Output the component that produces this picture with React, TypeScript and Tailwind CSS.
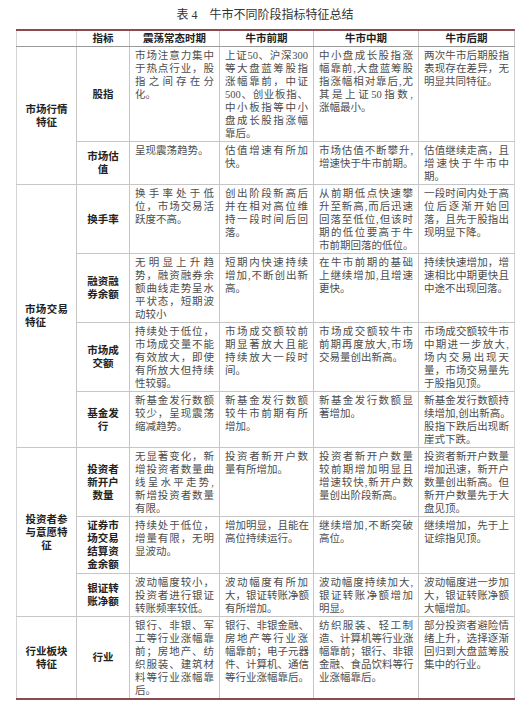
import React from 'react';

type Row = { label: string[]; cells: string[][] };
type Group = { label: string[]; spread?: boolean; rows: Row[] };

const groups: Group[] = [
  {
    label: ['市场行情', '特征'],
    rows: [
      {
        label: ['股指'],
        cells: [
          ['市场注意力集中', '于热点行业，股', '指之间存在分', '化。'],
          ['上证 50、沪深 300', '等大盘蓝筹股指', '涨幅靠前，中证', '500、创业板指、', '中小板指等中小', '盘成长股指涨幅', '靠后。'],
          ['中小盘成长股指涨', '幅靠前,大盘蓝筹股', '指涨幅相对靠后,尤', '其是上证 50 指数,', '涨幅最小。'],
          ['两次牛市后期股指', '表现存在差异，无', '明显共同特征。'],
        ],
      },
      {
        label: ['市场估', '值'],
        cells: [
          ['呈现震荡趋势。'],
          ['估值增速有所加', '快。'],
          ['市场估值不断攀升,', '增速快于牛市前期。'],
          ['估值继续走高，且', '增速快于牛市中', '期。'],
        ],
      },
    ],
  },
  {
    label: ['市场交易', '特征'],
    spread: true,
    rows: [
      {
        label: ['换手率'],
        cells: [
          ['换手率处于低', '位，市场交易活', '跃度不高。'],
          ['创出阶段新高后', '并在相对高位维', '持一段时间后回', '落。'],
          ['从前期低点快速攀', '升至新高,而后迅速', '回落至低位,但该时', '期的低位要高于牛', '市前期回落的低位。'],
          ['一段时间内处于高', '位后逐渐开始回', '落，且先于股指出', '现明显下降。'],
        ],
      },
      {
        label: ['融资融', '券余额'],
        cells: [
          ['无明显上升趋', '势，融资融券余', '额曲线走势呈水', '平状态，短期波', '动较小'],
          ['短期内快速持续', '增加,不断创出新', '高。'],
          ['在牛市前期的基础', '上继续增加,且增速', '更快。'],
          ['持续快速增加，增', '速相比中期更快且', '中途不出现回落。'],
        ],
      },
      {
        label: ['市场成', '交额'],
        cells: [
          ['持续处于低位，', '市场成交量不能', '有效放大，即使', '有所放大但持续', '性较弱。'],
          ['市场成交额较前', '期显著放大且能', '持续放大一段时', '间。'],
          ['市场成交额较牛市', '前期再度放大,市场', '交易量创出新高。'],
          ['市场成交额较牛市', '中期进一步放大,', '场内交易出现天', '量，市场交易量先', '于股指见顶。'],
        ],
      },
      {
        label: ['基金发', '行'],
        cells: [
          ['新基金发行数额', '较少，呈现震荡', '缩减趋势。'],
          ['新基金发行数额', '较牛市前期有所', '增加。'],
          ['新基金发行数额显', '著增加。'],
          ['新基金发行数额持', '续增加,创出新高。', '股指下跌后出现断', '崖式下跌。'],
        ],
      },
    ],
  },
  {
    label: ['投资者参', '与意愿特', '征'],
    rows: [
      {
        label: ['投资者', '新开户', '数量'],
        cells: [
          ['无显著变化，新', '增投资者数量曲', '线呈水平走势,', '新增投资者数量', '有限。'],
          ['投资者新开户数', '量有所增加。'],
          ['投资者新开户数量', '较前期增加明显且', '增速较快,新开户数', '量创出阶段新高。'],
          ['投资者新开户数量', '增加迅速，新开户', '数量创出新高。但', '新开户数量先于大', '盘见顶。'],
        ],
      },
      {
        label: ['证券市', '场交易', '结算资', '金余额'],
        cells: [
          ['持续处于低位，', '增量有限，无明', '显波动。'],
          ['增加明显，且能在', '高位持续运行。'],
          ['继续增加,不断突破', '高位。'],
          ['继续增加，先于上', '证综指见顶。'],
        ],
      },
      {
        label: ['银证转', '账净额'],
        cells: [
          ['波动幅度较小，', '投资者进行银证', '转账频率较低。'],
          ['波动幅度有所加', '大，银证转账净额', '有所增加。'],
          ['波动幅度持续加大,', '银证转账净额增加', '明显。'],
          ['波动幅度进一步加', '大，银证转账净额', '大幅增加。'],
        ],
      },
    ],
  },
  {
    label: ['行业板块', '特征'],
    rows: [
      {
        label: ['行业'],
        cells: [
          ['银行、非银、军', '工等行业涨幅靠', '前；房地产、纺', '织服装、建筑材', '料等行业涨幅靠', '后。'],
          ['银行、非银金融、', '房地产等行业涨', '幅靠前；电子元器', '件、计算机、通信', '等行业涨幅靠后。'],
          ['纺织服装、轻工制', '造、计算机等行业涨', '幅靠前；银行、非银', '金融、食品饮料等行', '业涨幅靠后。'],
          ['部分投资者避险情', '绪上升，选择逐渐', '回归到大盘蓝筹股', '集中的行业。'],
        ],
      },
    ],
  },
];

const headers = ['指标', '震荡常态时期', '牛市前期', '牛市中期', '牛市后期'];

const tokens = (s: string) => s.match(/[A-Za-z0-9.]+|[^\s]/g) ?? [];

// spread a line edge to edge, like justified print text
const Spread = ({ text }: { text: string }) => (
  <div className="flex justify-between whitespace-nowrap">
    {tokens(text).map((t, i) => (
      <span key={i}>{t}</span>
    ))}
  </div>
);

const Lines = ({ lines }: { lines: string[] }) => (
  <>
    {lines.map((line, i) =>
      i < lines.length - 1 ? (
        <Spread key={i} text={line} />
      ) : (
        <div key={i} className="whitespace-nowrap">
          {line}
        </div>
      ),
    )}
  </>
);

const edge = 'border-[#8c4a4f]';

export default function App() {
  return (
    <div className="min-h-[716px] w-[529px] bg-white font-['Liberation_Serif','Noto_Sans_CJK_SC',serif] text-[#4d4d4d]">
      <div className="ml-[16px] w-[498px] pt-[6px] pb-[5px] text-center text-[12px] leading-[18px] text-[#333]">
        表 4　牛市不同阶段指标特征总结
      </div>

      <table className="ml-[16px] w-[498px] table-fixed border-collapse text-[10.5px] leading-[13px]">
        <colgroup>
          <col className="w-[60px]" />
          <col className="w-[53px]" />
          <col className="w-[90px]" />
          <col className="w-[94px]" />
          <col className="w-[105px]" />
          <col className="w-[96px]" />
        </colgroup>
        <thead>
          <tr>
            <th className={`border-x border-x-[#d4d4d4] border-t-2 ${edge} border-b border-b-[#9a9a9a]`} />
            {headers.map((h) => (
              <th
                key={h}
                className={`border-x border-x-[#c6c6c6] border-t-2 ${edge} border-b border-b-[#9a9a9a] py-[1px] text-center font-bold text-[#222]`}>
                {h}
              </th>
            ))}
          </tr>
        </thead>
        <tbody>
          {groups.map((g, gi) => {
            const lastGroup = gi === groups.length - 1;
            return g.rows.map((r, ri) => {
              const lastRow = lastGroup && ri === g.rows.length - 1;
              const bottom = lastRow ? `border-b-2 ${edge}` : 'border-b border-b-[#c6c6c6]';
              return (
                <tr key={`${gi}-${ri}`}>
                  {ri === 0 && (
                    <td
                      rowSpan={g.rows.length}
                      className={`border-l border-l-[#d4d4d4] border-r border-r-[#c6c6c6] ${lastGroup ? `border-b-2 ${edge}` : 'border-b border-b-[#c6c6c6]'} px-[8px] align-middle font-bold text-[#222]`}>
                      {g.spread ? (
                        <>
                          <Spread text={g.label[0]} />
                          <div>{g.label[1]}</div>
                        </>
                      ) : (
                        g.label.map((l) => (
                          <div key={l} className="text-center">
                            {l}
                          </div>
                        ))
                      )}
                    </td>
                  )}
                  <td className={`border-x border-x-[#c6c6c6] ${bottom} px-[4px] py-[2px] text-center align-middle font-bold text-[#222]`}>
                    {r.label.map((l) => (
                      <div key={l}>{l}</div>
                    ))}
                  </td>
                  {r.cells.map((c, ci) => (
                    <td
                      key={ci}
                      className={`border-l border-l-[#c6c6c6] ${ci === 3 ? 'border-r border-r-[#d4d4d4]' : 'border-r border-r-[#c6c6c6]'} ${bottom} px-[5px] pt-[2px] pb-[1px] align-top`}>
                      <Lines lines={c} />
                    </td>
                  ))}
                </tr>
              );
            });
          })}
        </tbody>
      </table>
    </div>
  );
}
